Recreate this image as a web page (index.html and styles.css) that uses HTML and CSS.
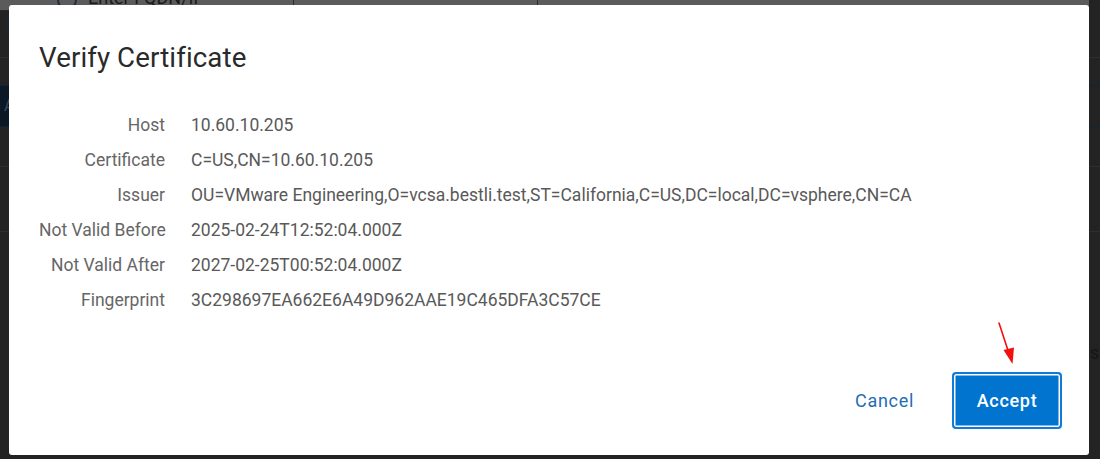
FILE: index.html
```html
<!DOCTYPE html>
<html lang="en">
<head>
<meta charset="utf-8">
<title>Verify Certificate</title>
<link rel="stylesheet" href="styles.css">
</head>
<body>
<div class="page">
  <div class="bg-top">
    <span class="bg-radio"></span>
    <span class="bg-label">Enter FQDN/IP</span>
    <span class="bg-cell"></span>
    <span class="bg-cell"></span>
  </div>
  <div class="bg-row bg-row-a"><span class="bg-glyph">C</span></div>
  <div class="bg-row bg-row-b"></div>
  <div class="bg-band"><span class="bg-glyph bg-glyph-light">A</span></div>
  <div class="bg-row bg-row-c"></div>
  <div class="bg-row bg-row-d"></div>
  <div class="bg-row bg-row-e"><span class="bg-side">se</span></div>
</div>

<div class="dialog" role="dialog" aria-labelledby="dlg-title">
  <h1 class="dialog-title" id="dlg-title">Verify Certificate</h1>
  <dl class="details">
    <dt>Host</dt><dd>10.60.10.205</dd>
    <dt>Certificate</dt><dd>C=US,CN=10.60.10.205</dd>
    <dt>Issuer</dt><dd>OU=VMware Engineering,O=vcsa.bestli.test,ST=California,C=US,DC=local,DC=vsphere,CN=CA</dd>
    <dt>Not Valid Before</dt><dd>2025-02-24T12:52:04.000Z</dd>
    <dt>Not Valid After</dt><dd>2027-02-25T00:52:04.000Z</dd>
    <dt>Fingerprint</dt><dd>3C298697EA662E6A49D962AAE19C465DFA3C57CE</dd>
  </dl>
  <div class="dialog-footer">
    <button class="btn btn-flat" type="button">Cancel</button>
    <button class="btn btn-primary" type="button">Accept</button>
  </div>
  <svg class="annot-arrow" width="30" height="50" viewBox="0 0 30 50" aria-hidden="true">
    <line x1="9" y1="5" x2="19.5" y2="37" stroke="#f01010" stroke-width="1.6" stroke-linecap="round"/>
    <polygon points="13.5,32 24,29.5 22.5,46" fill="#f01010"/>
  </svg>
</div>
</body>
</html>
```

FILE: styles.css
```css
html, body {
  margin: 0;
  padding: 0;
}

body {
  width: 1100px;
  height: 459px;
  overflow: hidden;
  background: #232323;
  font-family: Roboto, "Liberation Sans", Arial, sans-serif;
  position: relative;
}

/* ---------- dimmed page behind the modal ---------- */
.page {
  display: flex;
  flex-direction: column;
}

.bg-top {
  width: 1089px;
  height: 10px;
  background: #5b5b5b;
  border-bottom: 1px solid #1c2a38;
  display: flex;
  align-items: flex-start;
  overflow: hidden;
  color: #1a1a1a;
  font-size: 18px;
}

.bg-radio {
  width: 16px;
  height: 16px;
  margin: -10px 0 0 57px;
  border-radius: 50%;
  border: 2px solid #1f2e3d;
  flex: none;
}

.bg-label {
  margin: -12px 0 0 11px;
  width: 205px;
  line-height: 20px;
  white-space: nowrap;
}

.bg-cell {
  width: 243px;
  height: 10px;
  border-left: 1px solid #2a2a2a;
}

.bg-row {
  border-bottom: 1px solid #2e2e2e;
  position: relative;
}

.bg-row-a { height: 46px; }
.bg-row-b { height: 27px; border-bottom-color: #102338; }

.bg-band {
  height: 40px;
  background: linear-gradient(to right, #0b1826 0 12px, #232323 12px);
  border-bottom: 1px solid #102338;
  display: flex;
  align-items: center;
}

.bg-row-c { height: 39px; }
.bg-row-d { height: 64px; }
.bg-row-e { height: 120px; border-bottom: none; }

.bg-glyph {
  display: block;
  padding-left: 4px;
  font-size: 16px;
  line-height: 30px;
  color: #1b2836;
}

.bg-glyph-light {
  color: #3b4a5a;
}

.bg-side {
  position: absolute;
  left: 1090px;
  top: 110px;
  font-size: 18px;
  color: #151515;
}

/* ---------- modal ---------- */
.dialog {
  position: absolute;
  left: 9px;
  top: 5px;
  width: 1080px;
  height: 450px;
  box-sizing: border-box;
  background: #ffffff;
  border-radius: 3px;
  padding: 37px 27px 26px 30px;
  display: flex;
  flex-direction: column;
}

.dialog-title {
  margin: 0;
  font-size: 27.7px;
  line-height: 32px;
  font-weight: 400;
  color: #2a2a2a;
  letter-spacing: 0.1px;
}

.details {
  margin: 34px 0 0 0;
  display: grid;
  grid-template-columns: 126px 1fr;
  column-gap: 26px;
  font-size: 17.5px;
  line-height: 35px;
}

.details dt {
  text-align: right;
  color: #666666;
  white-space: nowrap;
}

.details dd {
  margin: 0;
  color: #595959;
  white-space: nowrap;
}

.dialog-footer {
  margin-top: auto;
  display: flex;
  justify-content: flex-end;
  align-items: center;
  gap: 19px;
}

.btn {
  font-family: Roboto, "Liberation Sans", Arial, sans-serif;
  font-size: 18px;
  letter-spacing: 0.7px;
  cursor: pointer;
  border-radius: 4px;
}

.btn-flat {
  background: transparent;
  border: none;
  color: #1f6db3;
  padding: 0 19px;
  height: 50px;
}

.btn-primary {
  width: 110px;
  height: 57px;
  background: #0074cf;
  color: #ffffff;
  font-weight: 500;
  border: 2px solid #1379d6;
  box-shadow: inset 0 0 0 1.5px #ffffff;
  padding: 0;
}

.annot-arrow {
  position: absolute;
  left: 981px;
  top: 313px;
}
```
